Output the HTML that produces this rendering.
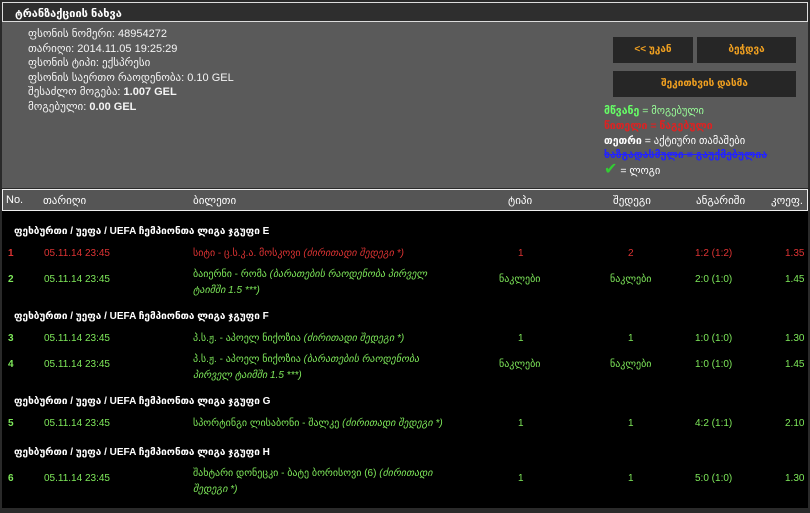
<!DOCTYPE html>
<html><head><meta charset="utf-8"><style>
*{margin:0;padding:0;box-sizing:border-box}
body{width:810px;height:513px;background:#2a2a2a;font-family:"Liberation Sans","DejaVu Sans",sans-serif;font-size:11px;color:#fff;position:relative;overflow:hidden}
.hdr{position:absolute;left:2px;top:2px;width:806px;height:20px;background:#2e2e2e;border:1px solid #ddd;font-weight:bold;font-size:11px;padding:4px 12px}
.info{position:absolute;left:2px;top:22px;width:806px;height:166px;background:#5a5a5a}
.lines{position:absolute;left:26px;top:5px;line-height:14.5px;font-size:11px;color:#f4f4f4}
.btn{position:absolute;background:#262626;color:#f0a020;font-weight:bold;font-size:10px;text-align:center;line-height:25px}
.leg{position:absolute;left:602px;top:82px;line-height:14.8px;font-size:10.5px;font-weight:bold}
.th{position:absolute;left:2px;top:189px;width:806px;height:22px;background:#555;border:1px solid #eee}
.th span,.r span{position:absolute;top:4px;white-space:nowrap}
.body{position:absolute;left:2px;top:211px;width:806px;height:297px;background:#000}
.g{position:absolute;left:12px;font-weight:bold;font-size:10px}
.r{position:absolute;left:0;width:806px;height:30px;font-size:10px}
.red{color:#d33}.grn{color:#7ee85a}
i{font-style:italic}
</style></head><body>
<div class="hdr">ტრანზაქციის ნახვა</div>
<div class="info">
<div class="lines">ფსონის ნომერი: 48954272<br>თარიღი: 2014.11.05 19:25:29<br>ფსონის ტიპი: ექსპრესი<br>ფსონის საერთო რაოდენობა: 0.10 GEL<br>შესაძლო მოგება: <b>1.007 GEL</b><br>მოგებული: <b>0.00 GEL</b></div>
<div class="btn" style="left:611px;top:15px;width:80px;height:26px">&lt;&lt; უკან</div>
<div class="btn" style="left:695px;top:15px;width:99px;height:26px">ბეჭდვა</div>
<div class="btn" style="left:611px;top:49px;width:183px;height:26px">შეკითხვის დასმა</div>
<div class="leg"><span style="color:#6f6">მწვანე</span> <span style="color:#9f9;font-weight:normal">= მოგებული</span><br><span style="color:#d22">წითელი = წაგებული</span><br>თეთრი <span style="font-weight:normal">= აქტიური თამაშები</span><br><span style="color:#22f;text-decoration:line-through">ხაზგადასმული = გაუქმებულია</span><br><span style="color:#3c3;font-size:16px">✔</span> <span style="font-weight:normal">= ლოგი</span></div>
</div>
<div class="th"><span style="left:3px">No.</span><span style="left:40px">თარიღი</span><span style="left:190px">ბილეთი</span><span style="left:505px">ტიპი</span><span style="left:610px">შედეგი</span><span style="left:693px">ანგარიში</span><span style="left:768px">კოეფ.</span></div>
<div class="body">
<div class="g" style="top:15px">ფეხბურთი / უეფა / UEFA ჩემპიონთა ლიგა ჯგუფი E</div>
<div class="r red" style="top:33px"><span style="left:6px;font-weight:bold">1</span><span style="left:42px">05.11.14 23:45</span><span style="left:191px">სიტი - ც.ს.კ.ა. მოსკოვი <i>(ძირითადი შედეგი *)</i></span><span style="left:516px">1</span><span style="left:626px">2</span><span style="left:693px">1:2 (1:2)</span><span style="left:783px">1.35</span></div>
<div class="r grn" style="top:53px"><span style="left:6px;top:10px;font-weight:bold">2</span><span style="left:42px;top:10px">05.11.14 23:45</span><span style="left:191px;top:3px;line-height:16px">ბაიერნი - რომა <i>(ბარათების რაოდენობა პირველ<br>ტაიმში 1.5 ***)</i></span><span style="left:497px;top:10px">ნაკლები</span><span style="left:608px;top:10px">ნაკლები</span><span style="left:693px;top:10px">2:0 (1:0)</span><span style="left:783px;top:10px">1.45</span></div>
<div class="g" style="top:100px">ფეხბურთი / უეფა / UEFA ჩემპიონთა ლიგა ჯგუფი F</div>
<div class="r grn" style="top:118px"><span style="left:6px;font-weight:bold">3</span><span style="left:42px">05.11.14 23:45</span><span style="left:191px">პ.ს.ჟ. - აპოელ ნიქოზია <i>(ძირითადი შედეგი *)</i></span><span style="left:516px">1</span><span style="left:626px">1</span><span style="left:693px">1:0 (1:0)</span><span style="left:783px">1.30</span></div>
<div class="r grn" style="top:138px"><span style="left:6px;top:10px;font-weight:bold">4</span><span style="left:42px;top:10px">05.11.14 23:45</span><span style="left:191px;top:3px;line-height:16px">პ.ს.ჟ. - აპოელ ნიქოზია <i>(ბარათების რაოდენობა<br>პირველ ტაიმში 1.5 ***)</i></span><span style="left:497px;top:10px">ნაკლები</span><span style="left:608px;top:10px">ნაკლები</span><span style="left:693px;top:10px">1:0 (1:0)</span><span style="left:783px;top:10px">1.45</span></div>
<div class="g" style="top:185px">ფეხბურთი / უეფა / UEFA ჩემპიონთა ლიგა ჯგუფი G</div>
<div class="r grn" style="top:203px"><span style="left:6px;font-weight:bold">5</span><span style="left:42px">05.11.14 23:45</span><span style="left:191px">სპორტინგი ლისაბონი - შალკე <i>(ძირითადი შედეგი *)</i></span><span style="left:516px">1</span><span style="left:626px">1</span><span style="left:693px">4:2 (1:1)</span><span style="left:783px">2.10</span></div>
<div class="g" style="top:236px">ფეხბურთი / უეფა / UEFA ჩემპიონთა ლიგა ჯგუფი H</div>
<div class="r grn" style="top:252px"><span style="left:6px;top:10px;font-weight:bold">6</span><span style="left:42px;top:10px">05.11.14 23:45</span><span style="left:191px;top:3px;line-height:16px">შახტარი დონეცკი - ბატე ბორისოვი (6) <i>(ძირითადი<br>შედეგი *)</i></span><span style="left:516px;top:10px">1</span><span style="left:626px;top:10px">1</span><span style="left:693px;top:10px">5:0 (1:0)</span><span style="left:783px;top:10px">1.30</span></div>
</div>
</body></html>
